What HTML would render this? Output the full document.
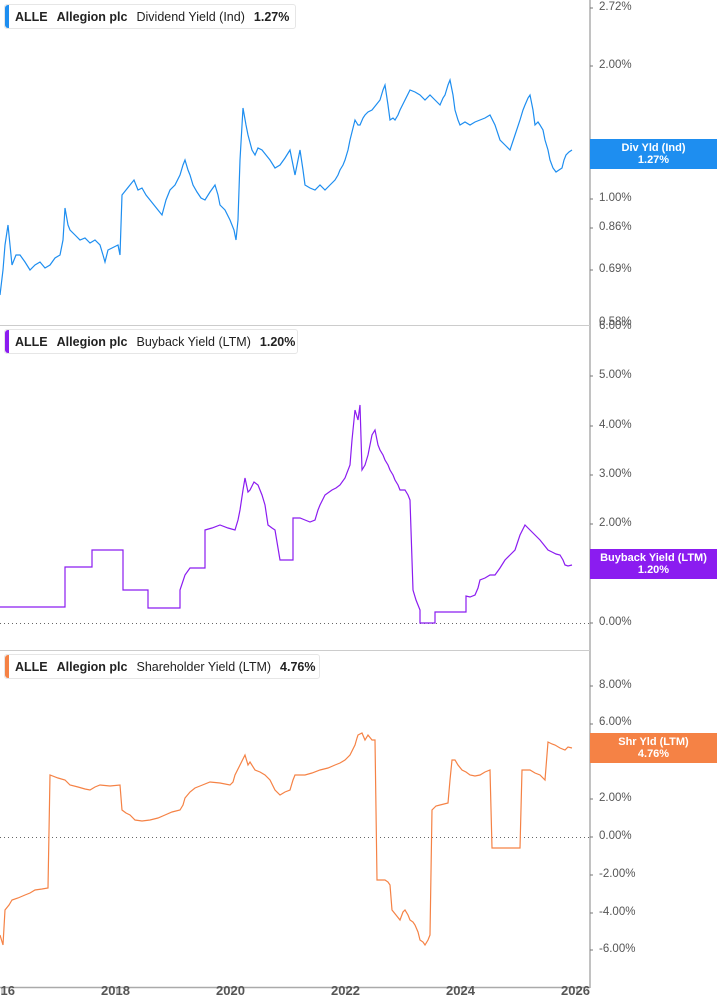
<!DOCTYPE html>
<html><head><style>
body{margin:0;width:717px;height:1005px;overflow:hidden;background:#fff;font-family:"Liberation Sans",Arial,sans-serif;position:relative}
.lg{position:absolute;left:4px;height:25px;border:1px solid #e6e6e6;border-radius:3px;background:#fff;font-size:12.5px;color:#222;line-height:25px;padding-left:10px;box-sizing:border-box;white-space:nowrap}
.lg:before{content:"";position:absolute;left:0;top:0;bottom:0;width:4px;border-radius:3px 0 0 3px;background:var(--c)}
.lg b{margin-right:9px}
.lg span{margin-right:9px}
.ax{position:absolute;left:599px;font-size:11.5px;color:#555}
.tag{position:absolute;left:590px;width:127px;height:30px;color:#fff;font-weight:bold;font-size:11px;text-align:center;line-height:12px;padding-top:3px;box-sizing:border-box}
.yr{position:absolute;top:983px;font-size:13px;font-weight:bold;color:#555}
</style></head><body>
<svg width="717" height="1005" style="position:absolute;left:0;top:0">
<line x1="590" y1="0" x2="590" y2="988" stroke="#999" stroke-width="1.2"/>
<g stroke="#777"><line x1="590" y1="8" x2="593" y2="8"/><line x1="590" y1="66" x2="593" y2="66"/><line x1="590" y1="199" x2="593" y2="199"/><line x1="590" y1="228" x2="593" y2="228"/><line x1="590" y1="270" x2="593" y2="270"/><line x1="590" y1="376" x2="593" y2="376"/><line x1="590" y1="426" x2="593" y2="426"/><line x1="590" y1="475" x2="593" y2="475"/><line x1="590" y1="524" x2="593" y2="524"/><line x1="590" y1="623" x2="593" y2="623"/><line x1="590" y1="686" x2="593" y2="686"/><line x1="590" y1="724" x2="593" y2="724"/><line x1="590" y1="799" x2="593" y2="799"/><line x1="590" y1="837" x2="593" y2="837"/><line x1="590" y1="875" x2="593" y2="875"/><line x1="590" y1="913" x2="593" y2="913"/><line x1="590" y1="950" x2="593" y2="950"/></g>
<line x1="0" y1="325.5" x2="590" y2="325.5" stroke="#ccc"/>
<line x1="0" y1="650.5" x2="590" y2="650.5" stroke="#ccc"/>
<line x1="0" y1="987.5" x2="590" y2="987.5" stroke="#aaa" stroke-width="1.5"/>
<line x1="0" y1="623.5" x2="590" y2="623.5" stroke="#666" stroke-dasharray="1,3"/>
<line x1="0" y1="837.5" x2="590" y2="837.5" stroke="#666" stroke-dasharray="1,3"/>
<g stroke="#999"><line x1="2" y1="988" x2="2" y2="994"/><line x1="117" y1="988" x2="117" y2="994"/><line x1="232" y1="988" x2="232" y2="994"/><line x1="347" y1="988" x2="347" y2="994"/><line x1="462" y1="988" x2="462" y2="994"/><line x1="577" y1="988" x2="577" y2="994"/></g>
<polyline fill="none" stroke="#1e8ef0" stroke-width="1.2" points="0,295 3,270 5,245 8,225 10,245 12,265 16,255 20,255 25,262 30,270 35,265 40,262 45,268 50,265 55,258 60,255 63,240 65,208 68,225 70,230 75,235 80,240 85,238 90,243 95,240 100,245 103,255 105,262 108,250 112,248 118,245 120,255 122,195 126,190 130,185 134,180 138,190 142,188 146,195 150,200 154,205 158,210 162,215 166,200 170,190 175,185 180,175 183,165 185,160 188,170 190,175 193,185 197,192 201,198 205,200 210,192 215,185 218,195 220,205 225,210 230,220 234,230 236,240 238,220 240,160 243,108 246,125 248,135 252,150 255,155 258,148 262,150 266,155 270,160 275,168 280,165 285,158 290,150 293,165 295,175 298,160 300,150 303,170 305,185 310,188 315,190 320,185 325,190 330,185 335,180 338,175 340,170 343,165 345,160 348,150 350,140 353,128 355,120 358,125 360,125 363,118 365,115 368,112 372,110 376,105 380,100 383,90 385,85 388,105 390,120 393,118 395,120 398,115 400,110 405,100 410,90 415,92 420,95 425,100 430,95 435,100 440,105 443,98 445,95 448,85 450,80 453,95 455,110 458,120 460,125 465,122 470,125 475,122 480,120 485,118 490,115 495,125 500,140 505,145 510,150 515,135 520,120 523,110 525,105 528,98 530,95 533,110 535,125 538,122 540,125 543,130 545,140 548,150 550,160 553,168 556,172 559,170 562,168 564,160 566,155 569,152 572,150"/>
<polyline fill="none" stroke="#8b1cf0" stroke-width="1.2" points="0,607 65,607 65,567 92,567 92,550 123,550 123,590 148,590 148,608 180,608 180,590 185,575 190,568 205,568 205,530 212,528 220,525 228,528 235,530 238,520 240,510 243,490 245,478 248,492 250,490 254,482 258,485 262,495 265,505 268,525 272,528 275,530 278,548 280,560 293,560 293,518 300,518 305,520 310,522 315,520 318,510 320,505 325,495 332,490 336,488 340,485 345,478 350,465 352,440 355,410 358,420 360,405 362,470 365,465 368,455 370,445 372,435 375,430 378,445 380,450 383,455 385,460 388,465 390,470 393,475 395,480 398,485 400,490 405,490 408,495 410,500 413,590 416,600 420,610 420,623 435,623 435,612 466,612 466,596 470,597 475,595 478,588 480,580 485,578 490,575 495,575 500,568 505,560 510,555 515,550 520,535 525,525 528,528 530,530 535,535 540,540 544,545 548,550 552,552 556,554 560,555 563,560 565,565 568,566 572,565"/>
<polyline fill="none" stroke="#f58245" stroke-width="1.2" points="0,935 3,945 5,910 9,905 12,900 18,898 25,895 30,893 35,890 42,889 48,888 50,775 58,778 65,780 70,785 78,787 85,789 90,790 95,787 100,785 110,786 120,785 122,810 126,813 130,815 135,820 142,821 150,820 158,818 165,815 172,812 180,810 183,805 185,798 190,792 195,788 200,786 210,782 220,783 230,785 233,782 235,775 240,765 245,755 248,765 250,762 255,770 260,772 265,775 270,780 275,790 280,795 285,792 290,790 293,780 295,775 300,775 305,775 312,773 320,770 328,768 335,765 340,763 345,760 350,755 355,745 357,738 358,735 362,733 365,740 368,735 372,740 375,740 377,880 381,880 385,880 388,882 390,885 392,910 396,915 400,920 403,912 405,910 408,915 410,920 413,922 415,925 418,932 420,940 423,942 425,945 428,940 430,935 432,810 436,806 440,805 444,804 448,803 450,780 452,760 455,760 458,765 462,770 466,772 470,775 475,776 480,775 485,772 490,770 492,848 505,848 520,848 522,770 526,770 530,770 535,773 540,775 545,780 548,742 552,744 555,745 560,748 565,750 568,747 572,748"/>
</svg>
<div class="lg" style="--c:#1e8ef0;top:4px;width:292px"><b>ALLE</b><b>Allegion plc</b><span>Dividend Yield (Ind)</span><b>1.27%</b></div>
<div class="lg" style="--c:#8b1cf0;top:329px;width:294px"><b>ALLE</b><b>Allegion plc</b><span>Buyback Yield (LTM)</span><b>1.20%</b></div>
<div class="lg" style="--c:#f58245;top:654px;width:316px"><b>ALLE</b><b>Allegion plc</b><span>Shareholder Yield (LTM)</span><b>4.76%</b></div>
<div class="ax" style="top:1px">2.72%</div>
<div class="ax" style="top:59px">2.00%</div>
<div class="ax" style="top:192px">1.00%</div>
<div class="ax" style="top:221px">0.86%</div>
<div class="ax" style="top:263px">0.69%</div>
<div class="ax" style="top:316px">0.58%</div>
<div class="ax" style="top:320px">6.00%</div>
<div class="ax" style="top:369px">5.00%</div>
<div class="ax" style="top:419px">4.00%</div>
<div class="ax" style="top:468px">3.00%</div>
<div class="ax" style="top:517px">2.00%</div>
<div class="ax" style="top:566px">1.00%</div>
<div class="ax" style="top:616px">0.00%</div>
<div class="ax" style="top:679px">8.00%</div>
<div class="ax" style="top:716px">6.00%</div>
<div class="ax" style="top:754px">4.00%</div>
<div class="ax" style="top:792px">2.00%</div>
<div class="ax" style="top:830px">0.00%</div>
<div class="ax" style="top:868px">-2.00%</div>
<div class="ax" style="top:906px">-4.00%</div>
<div class="ax" style="top:943px">-6.00%</div>
<div class="tag" style="top:139px;background:#1e8ef0">Div Yld (Ind)<br>1.27%</div>
<div class="tag" style="top:549px;background:#8b1cf0">Buyback Yield (LTM)<br>1.20%</div>
<div class="tag" style="top:733px;background:#f58245">Shr Yld (LTM)<br>4.76%</div>
<div class="yr" style="left:-14px">2016</div>
<div class="yr" style="left:101px">2018</div>
<div class="yr" style="left:216px">2020</div>
<div class="yr" style="left:331px">2022</div>
<div class="yr" style="left:446px">2024</div>
<div class="yr" style="left:561px">2026</div>
</body></html>
